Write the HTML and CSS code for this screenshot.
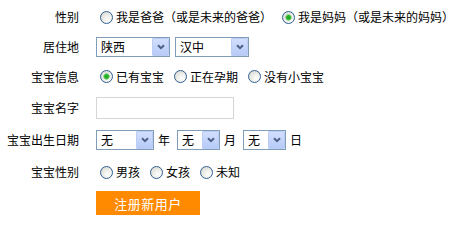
FILE: index.html
```html
<!DOCTYPE html>
<html lang="zh">
<head>
<meta charset="utf-8">
<link rel="stylesheet" href="styles.css">
</head>
<body>
<form class="form">
  <div class="lbl r1">性别</div>
  <div class="ctl r1">
    <label class="opt"><input type="radio" name="role" class="rd">我是爸爸（或是未来的爸爸）</label>
    <label class="opt"><input type="radio" name="role" class="rd" checked>我是妈妈（或是未来的妈妈）</label>
  </div>

  <div class="lbl r2">居住地</div>
  <div class="ctl r2">
    <span class="sel w74"><select><option>陕西</option></select><span class="arr"><svg width="8" height="6" viewBox="0 0 8 6"><path d="M1 1.2 L4 4.2 L7 1.2" fill="none" stroke="#4d6185" stroke-width="2"/></svg></span></span>
    <span class="sel w74 gapl"><select><option>汉中</option></select><span class="arr"><svg width="8" height="6" viewBox="0 0 8 6"><path d="M1 1.2 L4 4.2 L7 1.2" fill="none" stroke="#4d6185" stroke-width="2"/></svg></span></span>
  </div>

  <div class="lbl r3">宝宝信息</div>
  <div class="ctl r3">
    <label class="opt"><input type="radio" name="info" class="rd" checked>已有宝宝</label>
    <label class="opt"><input type="radio" name="info" class="rd">正在孕期</label>
    <label class="opt"><input type="radio" name="info" class="rd">没有小宝宝</label>
  </div>

  <div class="lbl r4">宝宝名字</div>
  <div class="ctl r4"><input type="text" class="txt"></div>

  <div class="lbl r5">宝宝出生日期</div>
  <div class="ctl r5">
    <span class="sel w58"><select><option>无</option></select><span class="arr"><svg width="8" height="6" viewBox="0 0 8 6"><path d="M1 1.2 L4 4.2 L7 1.2" fill="none" stroke="#4d6185" stroke-width="2"/></svg></span></span><span class="unit">年</span>
    <span class="sel w43"><select><option>无</option></select><span class="arr"><svg width="8" height="6" viewBox="0 0 8 6"><path d="M1 1.2 L4 4.2 L7 1.2" fill="none" stroke="#4d6185" stroke-width="2"/></svg></span></span><span class="unit">月</span>
    <span class="sel w43"><select><option>无</option></select><span class="arr"><svg width="8" height="6" viewBox="0 0 8 6"><path d="M1 1.2 L4 4.2 L7 1.2" fill="none" stroke="#4d6185" stroke-width="2"/></svg></span></span><span class="unit">日</span>
  </div>

  <div class="lbl r6">宝宝性别</div>
  <div class="ctl r6">
    <label class="opt"><input type="radio" name="sex" class="rd">男孩</label>
    <label class="opt"><input type="radio" name="sex" class="rd">女孩</label>
    <label class="opt"><input type="radio" name="sex" class="rd">未知</label>
  </div>

  <div class="lbl r7"></div>
  <div class="ctl r7"><button type="button" class="btn">注册新用户</button></div>
</form>
</body>
</html>
```

FILE: styles.css
```css
html, body {
  margin: 0;
  padding: 0;
  background: #fff;
}
body {
  font-family: "Noto Sans CJK SC", "Noto Sans", sans-serif;
  font-size: 12px;
  color: #000;
}
.form {
  display: grid;
  grid-template-columns: 79px 1fr;
  grid-template-rows: 30px 30px 29px 33px 32px 32px auto;
  column-gap: 17px;
  padding-top: 2px;
}
.lbl {
  display: flex;
  align-items: center;
  justify-content: flex-end;
  white-space: nowrap;
  line-height: 14px;
}
.ctl {
  display: flex;
  align-items: center;
  white-space: nowrap;
  line-height: 14px;
}
.opt {
  display: inline-flex;
  align-items: center;
  margin-right: 6px;
}
.rd {
  appearance: none;
  -webkit-appearance: none;
  width: 13px;
  height: 13px;
  margin: 0 3px 0 4px;
  border: 1px solid #2f5f93;
  border-radius: 50%;
  box-sizing: border-box;
  background: radial-gradient(circle at 65% 70%, #fdfdfd 0, #f2f2ee 35%, #d3d2ca 100%);
}
.rd:checked {
  background:
    radial-gradient(circle at 50% 50%, #21a121 0, #2db92d 2px, #9ad89a 3px, rgba(255,255,255,0) 3.6px),
    radial-gradient(circle at 65% 70%, #fdfdfd 0, #f2f2ee 35%, #d3d2ca 100%);
}
.sel {
  position: relative;
  display: inline-block;
  height: 20px;
}
.sel select {
  appearance: none;
  -webkit-appearance: none;
  height: 20px;
  width: 100%;
  margin: 0;
  border: 1px solid #7f9db9;
  border-radius: 0;
  background: #fff;
  font-family: "Noto Sans CJK SC", "Noto Sans", sans-serif;
  font-size: 12px;
  color: #000;
  padding: 0 0 0 4px;
  box-sizing: border-box;
  line-height: 18px;
}
.w74 { width: 74px; }
.w58 { width: 58px; }
.w43 { width: 43px; }
.gapl { margin-left: 5px; }
.arr {
  position: absolute;
  right: 1px;
  top: 1px;
  width: 15px;
  height: 16px;
  border: 1px solid #bccdf5;
  border-radius: 1px;
  background: linear-gradient(#d2defd, #b7cbf8);
  display: flex;
  align-items: center;
  justify-content: center;
  box-sizing: border-box;
  width: 17px;
  height: 18px;
}
.unit {
  margin: 0 7px 0 4px;
}
.txt {
  width: 138px;
  height: 22px;
  margin: 0;
  border: 1px solid #d6d6d6;
  box-sizing: border-box;
  padding: 0 3px;
  font-size: 12px;
}
.r7 {
  padding-top: 3px;
  align-items: flex-start;
}
.btn {
  width: 104px;
  height: 24px;
  margin: 0;
  border: 0;
  background: #ff8a00;
  color: #fff;
  font-family: "Noto Sans CJK SC", "Noto Sans", sans-serif;
  font-size: 13px;
  padding: 0;
  letter-spacing: 0.5px;
}
```
